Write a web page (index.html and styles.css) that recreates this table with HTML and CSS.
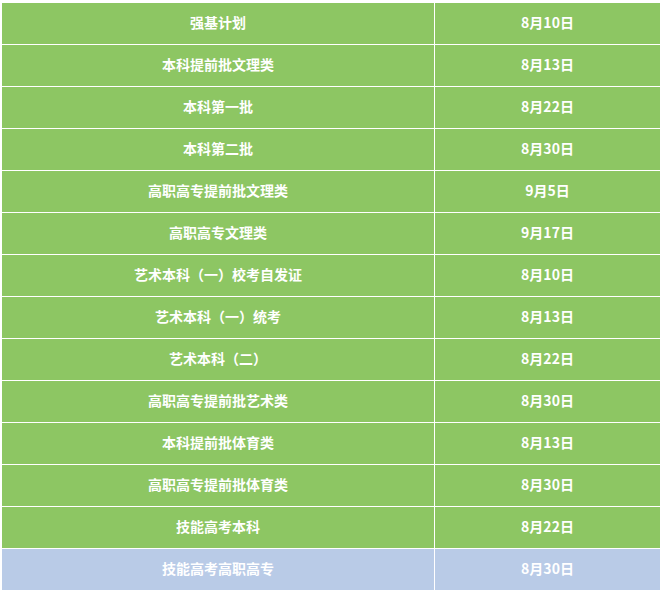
FILE: index.html
```html
<!DOCTYPE html>
<html lang="zh">
<head>
<meta charset="utf-8">
<link rel="stylesheet" href="styles.css">
</head>
<body>
<div class="table">
  <div class="row"><div class="cell name">强基计划</div><div class="cell date">8月10日</div></div>
  <div class="row"><div class="cell name">本科提前批文理类</div><div class="cell date">8月13日</div></div>
  <div class="row"><div class="cell name">本科第一批</div><div class="cell date">8月22日</div></div>
  <div class="row"><div class="cell name">本科第二批</div><div class="cell date">8月30日</div></div>
  <div class="row"><div class="cell name">高职高专提前批文理类</div><div class="cell date">9月5日</div></div>
  <div class="row"><div class="cell name">高职高专文理类</div><div class="cell date">9月17日</div></div>
  <div class="row"><div class="cell name">艺术本科（一）校考自发证</div><div class="cell date">8月10日</div></div>
  <div class="row"><div class="cell name">艺术本科（一）统考</div><div class="cell date">8月13日</div></div>
  <div class="row"><div class="cell name">艺术本科（二）</div><div class="cell date">8月22日</div></div>
  <div class="row"><div class="cell name">高职高专提前批艺术类</div><div class="cell date">8月30日</div></div>
  <div class="row"><div class="cell name">本科提前批体育类</div><div class="cell date">8月13日</div></div>
  <div class="row"><div class="cell name">高职高专提前批体育类</div><div class="cell date">8月30日</div></div>
  <div class="row"><div class="cell name">技能高考本科</div><div class="cell date">8月22日</div></div>
  <div class="row last"><div class="cell name">技能高考高职高专</div><div class="cell date">8月30日</div></div>
</div>
</body>
</html>
```
FILE: styles.css
```css
html, body {
  margin: 0;
  padding: 0;
  background: #ffffff;
}
body {
  padding: 3px 0 0 2px;
  font-family: "Noto Sans CJK SC", "Noto Sans", sans-serif;
}
.table {
  width: 658px;
  display: flex;
  flex-direction: column;
  gap: 1px;
}
.row {
  display: grid;
  grid-template-columns: 432px 225px;
  column-gap: 1px;
  height: 41px;
}
.cell {
  background: #8dc663;
  color: #ffffff;
  font-size: 14px;
  font-weight: 700;
  line-height: 1;
  padding-bottom: 3px;
  box-sizing: border-box;
  display: flex;
  align-items: center;
  justify-content: center;
}
.row.last .cell {
  background: #b9cbe7;
}
```
